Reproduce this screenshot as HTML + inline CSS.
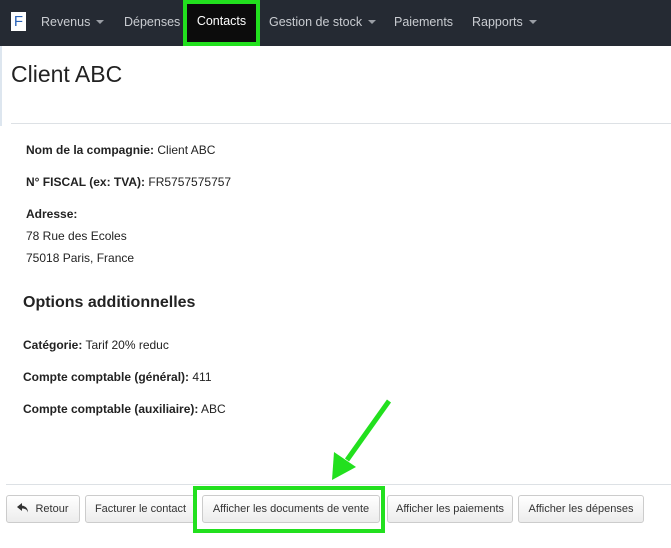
<!DOCTYPE html>
<html><head><meta charset="utf-8"><style>
body{margin:0;width:671px;height:548px;background:#fff;font-family:"Liberation Sans",sans-serif;position:relative;overflow:hidden;color:#222}
.nav{position:absolute;left:0;top:0;width:671px;height:46px;background:#252a33}
.nav span{position:absolute;top:15px;font-size:12.5px;color:#c9ccd1}
.caret{display:inline-block;border-top:4px solid #9a9ea5;border-left:4px solid transparent;border-right:4px solid transparent;margin-left:6px;vertical-align:2px}
.logo{position:absolute;left:11px;top:12px;width:15px;height:19px;background:#fff;color:#2a63b8;font-size:15px;text-align:center;line-height:19px}
.ct{position:absolute;left:183px;top:0;width:77px;height:46px;background:#0c0c0c;box-sizing:border-box;border:4px solid #22e01e;color:#fff;font-size:12.5px;text-align:center;line-height:35px}
.t{position:absolute;font-size:12px;color:#222}
b{font-weight:bold}
.btn{position:absolute;top:495px;height:28px;box-sizing:border-box;border:1px solid #ccc;border-radius:3px;background:linear-gradient(#fff,#ececec);font-size:11px;line-height:27px;text-align:center;color:#333}
</style></head><body>
<div class="nav">
<div class="logo">F</div>
<span style="left:41px">Revenus<i class="caret"></i></span>
<span style="left:124px">Dépenses</span>
<span style="left:269px">Gestion de stock<i class="caret"></i></span>
<span style="left:394px">Paiements</span>
<span style="left:472px">Rapports<i class="caret"></i></span>
</div>
<div class="ct">Contacts</div>
<div style="position:absolute;left:0;top:46px;width:2px;height:80px;background:#dde6ef"></div>
<div style="position:absolute;left:11px;top:61px;font-size:23px;color:#222">Client ABC</div>
<div style="position:absolute;left:11px;top:123px;width:660px;height:1px;background:#dde1e5"></div>
<div class="t" style="left:26px;top:143px"><b>Nom de la compagnie:</b> Client ABC</div>
<div class="t" style="left:26px;top:175px"><b>N° FISCAL (ex: TVA):</b> FR5757575757</div>
<div class="t" style="left:26px;top:207px"><b>Adresse:</b></div>
<div class="t" style="left:26px;top:229px">78 Rue des Ecoles</div>
<div class="t" style="left:26px;top:251px">75018 Paris, France</div>
<div style="position:absolute;left:23px;top:294px;font-size:16px;font-weight:bold;color:#222">Options additionnelles</div>
<div class="t" style="left:23px;top:338px"><b>Catégorie:</b> Tarif 20% reduc</div>
<div class="t" style="left:23px;top:370px"><b>Compte comptable (général):</b> 411</div>
<div class="t" style="left:23px;top:402px"><b>Compte comptable (auxiliaire):</b> ABC</div>
<div style="position:absolute;left:6px;top:484px;width:665px;height:1px;background:#dde1e5"></div>
<div class="btn" style="left:6px;width:74px"><svg width="12" height="10" viewBox="0 0 12 10" style="vertical-align:-1px;margin-right:6px"><path d="M5 0 L0 4 L5 8 L5 5.5 C8 5.5 10 6.5 11 9.5 C11 5 8 2.8 5 2.6 Z" fill="#333"/></svg>Retour</div>
<div class="btn" style="left:85px;width:111px">Facturer le contact</div>
<div style="position:absolute;left:193px;top:486px;width:192px;height:47px;box-sizing:border-box;border:4px solid #22e01e"></div>
<div class="btn" style="left:202px;width:178px">Afficher les documents de vente</div>
<div class="btn" style="left:387px;width:126px">Afficher les paiements</div>
<div class="btn" style="left:518px;width:126px">Afficher les dépenses</div>
<svg style="position:absolute;left:0;top:0" width="671" height="548"><line x1="389" y1="401" x2="347" y2="460" stroke="#22e01e" stroke-width="5"/><polygon points="332,480 334,452 356,467" fill="#22e01e"/></svg>
</body></html>
